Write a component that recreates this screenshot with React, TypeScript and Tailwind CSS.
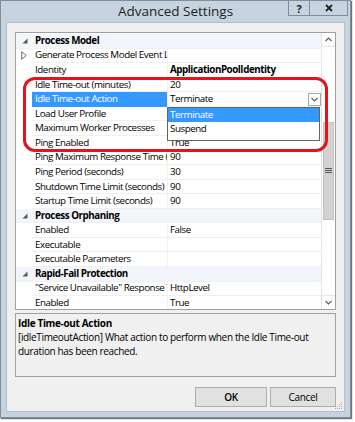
import React from 'react';

type Row =
  | { kind: 'cat'; label: string }
  | { kind: 'prop'; label: string; value?: string; bold?: boolean; expander?: boolean; selected?: boolean };

// values of the two rows under the open drop-down are hidden in the screenshot
const rows: Row[] = [
  { kind: 'cat', label: 'Process Model' },
  { kind: 'prop', label: 'Generate Process Model Event Log Entry', expander: true },
  { kind: 'prop', label: 'Identity', value: 'ApplicationPoolIdentity', bold: true },
  { kind: 'prop', label: 'Idle Time-out (minutes)', value: '20' },
  { kind: 'prop', label: 'Idle Time-out Action', value: 'Terminate', selected: true },
  { kind: 'prop', label: 'Load User Profile' },
  { kind: 'prop', label: 'Maximum Worker Processes' },
  { kind: 'prop', label: 'Ping Enabled', value: 'True' },
  { kind: 'prop', label: 'Ping Maximum Response Time (seconds)', value: '90' },
  { kind: 'prop', label: 'Ping Period (seconds)', value: '30' },
  { kind: 'prop', label: 'Shutdown Time Limit (seconds)', value: '90' },
  { kind: 'prop', label: 'Startup Time Limit (seconds)', value: '90' },
  { kind: 'cat', label: 'Process Orphaning' },
  { kind: 'prop', label: 'Enabled', value: 'False' },
  { kind: 'prop', label: 'Executable' },
  { kind: 'prop', label: 'Executable Parameters' },
  { kind: 'cat', label: 'Rapid-Fail Protection' },
  { kind: 'prop', label: '"Service Unavailable" Response Type', value: 'HttpLevel' },
  { kind: 'prop', label: 'Enabled', value: 'True' },
];

const font = { fontFamily: "'Segoe UI', 'Open Sans', 'Noto Sans', sans-serif" };

function Chevron({ up = false }: { up?: boolean }) {
  return (
    <svg width="7" height="5" viewBox="0 0 7 5">
      <path d={up ? 'M0.5 4 L3.5 1 L6.5 4' : 'M0.5 1 L3.5 4 L6.5 1'} fill="none" stroke="#606060" strokeWidth="1.2" />
    </svg>
  );
}

function Expanded() {
  return (
    <svg width="6" height="6" viewBox="0 0 6 6">
      <path d="M5.5 0.5 L5.5 5.5 L0.5 5.5 Z" fill="#595959" />
    </svg>
  );
}

function Collapsed() {
  return (
    <svg width="6" height="9" viewBox="0 0 6 9">
      <path d="M0.7 0.8 L5.2 4.5 L0.7 8.2 Z" fill="none" stroke="#6a6a6a" strokeWidth="1" />
    </svg>
  );
}

function GridRow({ row }: { row: Row }) {
  if (row.kind === 'cat') {
    return (
      <div className="flex h-[14.57px] items-center bg-[#f2f5fa] border-b border-[#eef0f3]">
        <div className="flex w-[16px] justify-center pl-[1px]">
          <Expanded />
        </div>
        <div className="pl-[3px] font-bold text-black">{row.label}</div>
      </div>
    );
  }
  return (
    <div className="relative flex h-[14.57px] items-stretch">
      <div className="flex w-[16px] items-center justify-center">{row.expander && <Collapsed />}</div>
      <div
        className={
          'flex w-[135px] items-center overflow-hidden whitespace-nowrap pl-[3px] border-b ' +
          (row.selected ? 'bg-[#3399ff] text-white border-[#3399ff]' : 'text-black border-[#f0f0f0]')
        }
      >
        {row.label}
      </div>
      <div className="flex flex-1 items-center overflow-hidden whitespace-nowrap border-l border-b border-[#f0f0f0] pl-[2px]">
        <span className={row.bold ? 'font-bold text-black' : 'text-black'}>{row.value}</span>
        {row.selected && (
          <div className="ml-auto flex h-[13px] w-[13px] items-center justify-center border border-[#a8a8a8] bg-white">
            <Chevron />
          </div>
        )}
      </div>
      {row.selected && (
        <div className="absolute left-[151px] top-[15px] z-10 flex h-[34px] w-[153px] flex-col border border-[#646464] bg-white">
          <div className="flex h-[14px] items-center bg-[#3399ff] pl-[2px] text-white">Terminate</div>
          <div className="flex h-[14px] items-center pl-[2px] text-black">Suspend</div>
        </div>
      )}
    </div>
  );
}

export default function App() {
  return (
    <div
      className="relative h-[422px] w-[355px] overflow-hidden bg-white text-[10px] leading-none tracking-[-0.35px]"
      style={font}
    >
      <div className="flex h-[418px] w-[351px] flex-col border border-[#7f8e9c] bg-[#c7d4df] px-[5px] pb-[5px] shadow-[1px_1px_1px_rgba(0,0,0,0.55)]">
        {/* title bar */}
        <div className="-mx-[5px] grid h-[21px] grid-cols-[1fr_auto_1fr]">
          <div />
          <div className="pt-[4px] text-[13.5px] tracking-normal text-[#1e1e1e]">Advanced Settings</div>
          <div className="flex items-start justify-end pr-[2px]">
            <div className="flex h-[15px] w-[21px] items-center justify-center border-l border-b border-[#7d8d9c] text-[11px] font-bold text-[#222]">
              ?
            </div>
            <div className="flex h-[15px] w-[39px] items-center justify-center border-l border-r border-b border-[#7d8d9c]">
              <svg width="8" height="8" viewBox="0 0 8 8">
                <path d="M1 1 L7 7 M7 1 L1 7" stroke="#222" strokeWidth="1.8" />
              </svg>
            </div>
          </div>
        </div>

        {/* content */}
        <div className="relative flex flex-1 flex-col border border-[#b3bfca] bg-[#f0f0f0] px-[8px] pt-[9px]">
          {/* property grid */}
          <div className="flex h-[278px] overflow-hidden border border-[#a0a0a0] bg-white text-[9.8px] tracking-[-0.45px]">
            <div className="flex-1 overflow-hidden pt-[1px]">
              {rows.map((r, i) => (
                <GridRow key={i} row={r} />
              ))}
            </div>
            <div className="flex w-[14px] flex-col border-l border-[#e2e2e2] bg-white">
              <div className="flex h-[14px] items-center justify-center border-b border-[#e6e6e6]">
                <Chevron up />
              </div>
              <div className="flex-1">
                <div className="mx-[1px] mt-[75px] flex h-[98px] items-center justify-center border border-[#c2c2c2] bg-[#d2d2d2]">
                  <svg width="7" height="6" viewBox="0 0 7 6">
                    <path d="M0 0.5 H7 M0 2.5 H7 M0 4.5 H7" stroke="#555" strokeWidth="1" />
                  </svg>
                </div>
              </div>
              <div className="flex h-[14px] items-center justify-center border-t border-[#e6e6e6]">
                <Chevron />
              </div>
            </div>
          </div>

          {/* description */}
          <div className="mt-[3px] h-[64px] border border-[#a0a0a0] bg-[#f0f0f0] px-[2px] pt-[2px] leading-[14px] text-black">
            <div className="font-bold">Idle Time-out Action</div>
            <div className="whitespace-nowrap">
              [idleTimeoutAction] What action to perform when the Idle Time-out
              <br />
              duration has been reached.
            </div>
          </div>

          {/* buttons */}
          <div className="mt-[10px] flex justify-end gap-[3px]">
            <button className="h-[20px] w-[72px] border border-[#adadad] bg-[#e1e1e1] font-semibold text-black">OK</button>
            <button className="h-[20px] w-[66px] border border-[#adadad] bg-[#e1e1e1] text-black">Cancel</button>
          </div>

          {/* size grip */}
          <svg className="absolute bottom-[1px] right-[1px]" width="8" height="8" viewBox="0 0 8 8">
            <g fill="#a9a9a9">
              <rect x="6" y="0" width="1" height="1" />
              <rect x="4" y="2" width="1" height="1" />
              <rect x="6" y="2" width="1" height="1" />
              <rect x="2" y="4" width="1" height="1" />
              <rect x="4" y="4" width="1" height="1" />
              <rect x="6" y="4" width="1" height="1" />
              <rect x="0" y="6" width="1" height="1" />
              <rect x="2" y="6" width="1" height="1" />
              <rect x="4" y="6" width="1" height="1" />
              <rect x="6" y="6" width="1" height="1" />
            </g>
          </svg>
        </div>
      </div>

      {/* red annotation */}
      <div className="pointer-events-none absolute left-[23px] top-[77px] h-[75px] w-[305px] rounded-[12px] border-[3px] border-[#e3141c]" />
    </div>
  );
}
